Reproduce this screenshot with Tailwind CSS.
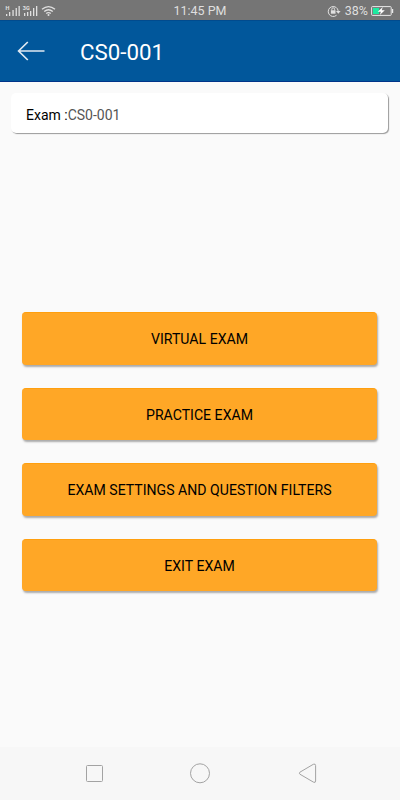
<!DOCTYPE html>
<html lang="en">
<head>
<meta charset="utf-8">
<title>CS0-001</title>
<script src="https://cdn.jsdelivr.net/npm/@tailwindcss/browser@4"></script>
</head>
<body class="w-[400px] h-[800px] overflow-hidden flex flex-col bg-[#fafafa] font-['Roboto',sans-serif] text-black">
  <div class="h-5 shrink-0 bg-[#757575] grid grid-cols-3 items-center text-[#dfdfdf] text-[12.5px] leading-5">
    <svg class="w-[60px] h-5" viewBox="0 0 60 20" fill="#e0e0e0">
      <text x="5.6" y="9.3" font-size="5.5" font-weight="700">H</text>
      <path d="M6 13h1.3v2H6zM9 11h1.3v4H9zM12.4 9h1.3v6h-1.3zM15.6 7h1.3v8h-1.3zM18.5 5h1.3v10h-1.3z"/>
      <text x="22.8" y="9.3" font-size="5.5" font-weight="700">3G</text>
      <path d="M24 12h1.3v3H24zM27 11h1.3v4H27zM30 10h1.3v5H30zM33 7h1.3v8H33zM36 5h1.3v10H36z"/>
      <g fill="none" stroke="#e0e0e0" stroke-width="1.3"><path d="M42 8.3q6.5-5.4 13 0M44.2 10.5q4.3-3.5 8.6 0M46.2 12.6q2.3-1.8 4.6 0"/></g>
      <circle cx="48.5" cy="14" r="1"/>
    </svg>
    <span class="text-center pt-px">11:45 PM</span>
    <div class="flex items-center justify-end pr-[6px]">
      <svg class="w-[14px] h-3 mr-1" viewBox="0 0 14 12" fill="none" stroke="#e0e0e0">
        <path d="M9.6 10.2A5 5 0 1 1 11.2 6"/><path d="M9 6h4.6L11.3 8.7z" fill="#e0e0e0" stroke="none"/>
        <path d="M4.8 5.5V4.2a1.4 1.4 0 0 1 2.8 0v1.3" stroke-width=".9"/><path d="M3.9 5.3h4.6v3.4H3.9z" fill="#e0e0e0" stroke="none"/>
      </svg>
      <span class="mr-[3px]">38%</span>
      <svg class="w-[23px] h-[10px]" viewBox="0 0 23 10">
        <rect x=".6" y=".6" width="19.6" height="8.8" rx=".8" fill="none" stroke="#e8e8e8" stroke-width="1"/>
        <path d="M2 2h6v6H2z" fill="#1de9a0"/><path d="M21 3h1.2v4H21z" fill="#e8e8e8"/>
        <path d="M11.8 1L6.7 5.7h3.2L8.8 9l5-4.8h-3.1z" fill="#fff"/>
      </svg>
    </div>
  </div>
  <header class="h-[62px] shrink-0 bg-[#01579b] border-t border-t-[#014b8e] border-b border-b-[#003489] flex items-center text-white">
    <svg class="w-7 h-6 ml-[17px]" viewBox="0 0 28 24" fill="none" stroke="#dfe9f2" stroke-width="1.7"><path d="M10.8 3L1.6 12l9.2 9M1.6 12H27.5"/></svg>
    <h1 class="ml-[35px] pt-0.5 text-[22.3px] leading-none">CS0-001</h1>
  </header>
  <section class="mt-[11px] ml-[11px] w-[376.5px] h-10 shrink-0 bg-white rounded-[5px] shadow-[1px_1px_1px_#999] pl-[15px] pt-1 flex items-center text-[14px]">
    <span>Exam :</span><span class="text-[#555]">CS0-001</span>
  </section>
  <main class="flex-1 pt-[179px] px-[22px] flex flex-col gap-[23px] text-[14.1px] [&>button]:h-[52.5px] [&>button]:w-[355px] [&>button]:shrink-0 [&>button]:rounded [&>button]:bg-[#ffa726] [&>button]:border-t [&>button]:border-t-[#ff9f0e] [&>button]:shadow-[1px_2px_2px_#aaa] [&>button]:pt-[2px]">
    <button>VIRTUAL EXAM</button>
    <button>PRACTICE EXAM</button>
    <button>EXAM SETTINGS AND QUESTION FILTERS</button>
    <button>EXIT EXAM</button>
  </main>
  <nav class="h-[53px] shrink-0 bg-[#f7f7f7]">
    <svg class="w-full h-full" viewBox="0 0 400 53" fill="none" stroke="#a3a3a3" stroke-width="1">
      <rect x="86.5" y="18.5" width="16" height="16" rx="1"/>
      <circle cx="200" cy="26.3" r="9.5"/>
      <path d="M299.9 25.2L313.3 17.3Q315.6 16.4 315.6 18.5V34Q315.6 36.2 313.4 35.1L299.9 27.2Q298.8 26.2 299.9 25.2Z"/>
    </svg>
  </nav>
</body>
</html>
